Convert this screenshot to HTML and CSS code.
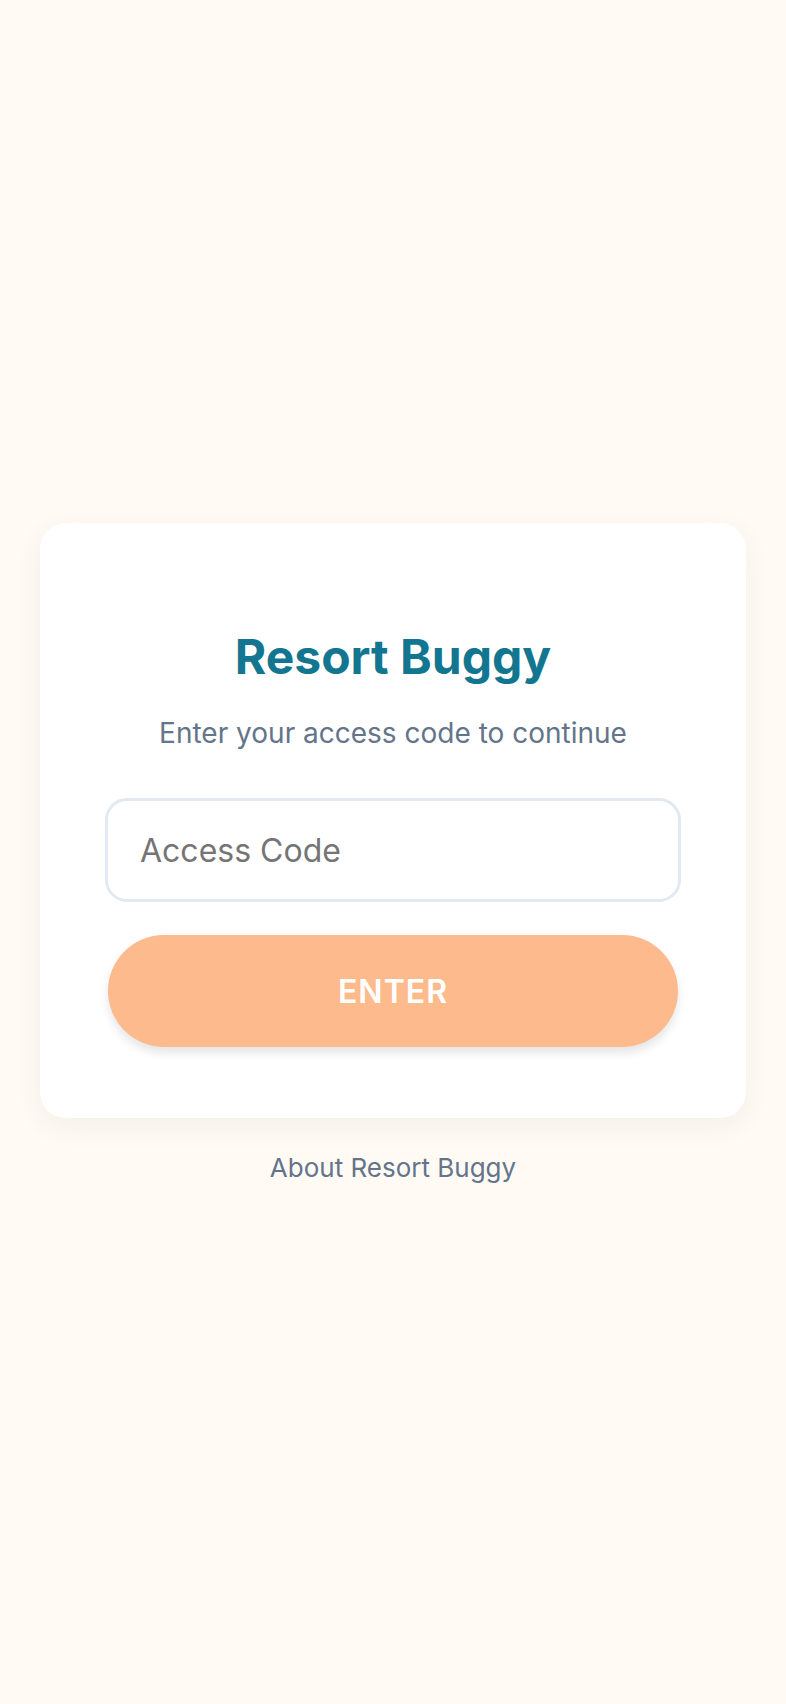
FILE: index.html
```html
<!DOCTYPE html>
<html lang="en">
<head>
    <meta charset="UTF-8">
    <meta name="viewport" content="width=device-width, initial-scale=1.0">
    <title>Resort Buggy</title>
    <link rel="stylesheet" href="styles.css">
</head>
<body>
    <main class="page">
        <div class="login-card">
            <h1 class="login-title">Resort Buggy</h1>
            <p class="login-subtitle">Enter your access code to continue</p>
            <form class="login-form">
                <input class="code-input" type="text" placeholder="Access Code">
                <button class="enter-btn" type="button">ENTER</button>
            </form>
        </div>
        <a class="about-link" href="#">About Resort Buggy</a>
    </main>
</body>
</html>
```

FILE: styles.css
```css
* {
  box-sizing: border-box;
}

html, body {
  margin: 0;
  padding: 0;
}

body {
  background-color: #fffbf4;
  font-family: Inter, "Noto Sans", sans-serif;
}

.page {
  min-height: 100vh;
  display: flex;
  flex-direction: column;
  align-items: center;
  justify-content: center;
  padding: 6px 40px 0;
}

.login-card {
  width: 100%;
  background: #fff;
  border-radius: 26px;
  box-shadow: 0 8px 28px rgba(60, 40, 20, 0.06);
  padding: 105px 65px 71px;
  text-align: center;
}

.login-title {
  margin: 0;
  font-size: 48px;
  line-height: 1.2;
  font-weight: 700;
  color: #137690;
}

.login-subtitle {
  margin: 27px 0 44px;
  font-size: 28px;
  line-height: 1.5;
  color: #64748b;
}

.login-form {
  display: flex;
  flex-direction: column;
  gap: 33px;
}

.code-input {
  width: 100%;
  height: 104px;
  border: 3px solid #e3e9f1;
  border-radius: 22px;
  padding: 0 32px;
  font-family: inherit;
  font-size: 32px;
  color: #334155;
  background: #fff;
  outline: none;
}

.code-input::placeholder {
  color: #757575;
}

.enter-btn {
  margin: 0 3px;
  height: 112px;
  border: none;
  border-radius: 56px;
  background: #fdba8c;
  color: #fff;
  font-family: inherit;
  font-size: 32px;
  font-weight: 600;
  letter-spacing: 1px;
  box-shadow: 0 6px 10px rgba(0, 0, 0, 0.1);
  cursor: pointer;
}

.about-link {
  margin-top: 30px;
  font-size: 26px;
  line-height: 1.5;
  color: #64748b;
  text-decoration: none;
}
```
